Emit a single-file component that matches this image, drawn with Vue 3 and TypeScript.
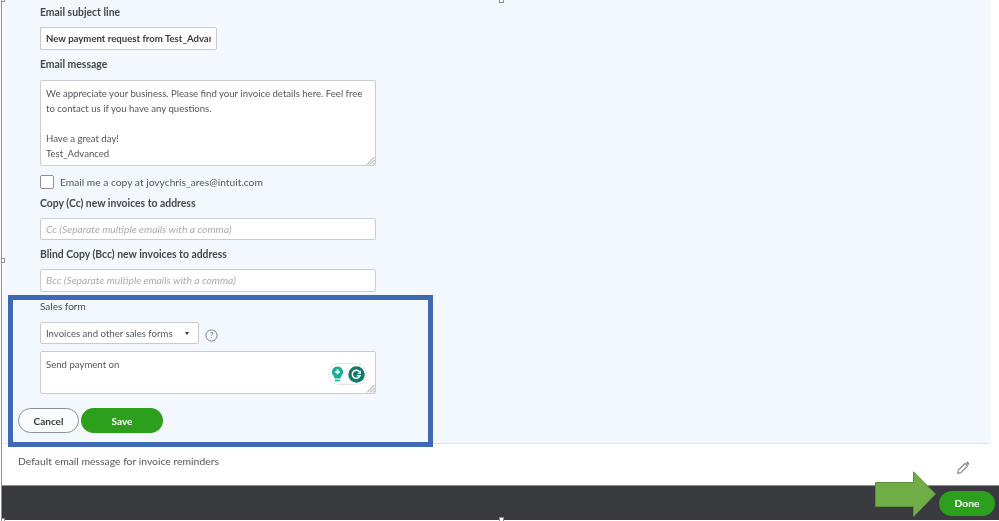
<script setup lang="ts">
const messageLines: string[] = [
  'We appreciate your business. Please find your invoice details here. Feel free',
  'to contact us if you have any questions.',
  '\u00a0',
  'Have a great day!',
  'Test_Advanced',
]
const handles: string[] = ['h-top', 'h-left', 'h-corner', 'h-bottom', 'h-bl']
</script>

<template>
  <div class="page">
    <main class="panel">
      <section class="form">
        <div class="label l-subject">Email subject line</div>
        <div class="field subject">New payment request from Test_Advanced</div>

        <div class="label l-message">Email message</div>
        <div class="field area message">
          <div v-for="(line, i) in messageLines" :key="i">{{ line }}</div>
          <svg class="grip" width="9" height="9" viewBox="0 0 9 9"><path d="M1 8.5 8.5 1M4 8.5 8.5 4M7 8.5 8.5 7" stroke="#777" stroke-width=".8" fill="none" /></svg>
        </div>

        <div class="check-row">
          <span class="checkbox"></span>
          <span class="check-text">Email me a copy at jovychris_ares@intuit.com</span>
        </div>

        <div class="label l-cc">Copy (Cc) new invoices to address</div>
        <div class="field ph cc">Cc (Separate multiple emails with a comma)</div>

        <div class="label l-bcc">Blind Copy (Bcc) new invoices to address</div>
        <div class="field ph bcc">Bcc (Separate multiple emails with a comma)</div>

        <div class="plain-label">Sales form</div>
        <div class="select-row">
          <div class="field select">
            <span>Invoices and other sales forms</span>
            <span class="caret"></span>
          </div>
          <svg class="help" width="13" height="13" viewBox="0 0 13 13">
            <circle cx="6.5" cy="6.5" r="5.6" fill="none" stroke="#7d8085" stroke-width="1" />
            <text x="6.5" y="9.3" text-anchor="middle" class="help-q">?</text>
          </svg>
        </div>
        <div class="field area payment">
          Send payment on
          <div class="grammarly">
            <svg width="13" height="17" viewBox="0 0 13 17">
              <path d="M6.5 0.5a5.6 5.6 0 0 1 3.4 10l-.3 2H3.4l-.3-2A5.6 5.6 0 0 1 6.5.5Z" fill="#15b097" />
              <path d="M6.5 3.3v5M4 5.8h5" stroke="#fff" stroke-width="1.8" />
              <path d="M3.8 14.5h5.4" stroke="#15b097" stroke-width="1.6" />
            </svg>
            <svg width="17" height="17" viewBox="0 0 17 17">
              <circle cx="8.5" cy="8.5" r="8.2" fill="#0f7a68" />
              <path d="M11.7 6.2a4 4 0 1 0 .3 3.6H8.8" fill="none" stroke="#fff" stroke-width="1.5" />
              <path d="M12.3 4.8v2.6H9.8" fill="none" stroke="#fff" stroke-width="1.2" />
            </svg>
          </div>
          <svg class="grip" width="9" height="9" viewBox="0 0 9 9"><path d="M1 8.5 8.5 1M4 8.5 8.5 4M7 8.5 8.5 7" stroke="#777" stroke-width=".8" fill="none" /></svg>
        </div>

        <div class="actions">
          <button class="btn cancel" type="button">Cancel</button>
          <button class="btn save" type="button">Save</button>
        </div>
      </section>
    </main>

    <div class="reminder">
      <span>Default email message for invoice reminders</span>
      <svg class="pencil" width="14" height="14" viewBox="0 0 14 14">
        <path d="M1.6 12.4l.8-3.3 6.6-6.6 2.5 2.5-6.6 6.6-3.3.8Z" fill="#fff" stroke="#85888c" stroke-width="1.1" stroke-linejoin="round" />
        <path d="M9.8 1.7l.8-.6a1 1 0 0 1 1.3 0l1 1a1 1 0 0 1 0 1.3l-.7.8Z" fill="#85888c" />
      </svg>
    </div>

    <footer class="footer">
      <button class="btn done" type="button">Done</button>
    </footer>

    <div class="highlight"></div>
    <svg class="arrow" width="62" height="47" viewBox="0 0 62 47">
      <path d="M.5 11.5h38V.8L60.5 23 38.5 45.7V35.5H.5Z" fill="#70ad47" stroke="#5b9138" stroke-width="1" />
    </svg>
    <span v-for="h in handles" :key="h" class="handle" :class="h"></span>
  </div>
</template>

<style>
html, body { margin: 0; background: #fff; }
</style>

<style scoped>
.page {
  position: relative;
  width: 998px;
  height: 521px;
  margin-left: 1px;
  overflow: hidden;
  background: #fff;
  font-family: "Lato", "Liberation Sans", sans-serif;
  font-size: 10px;
  color: #393a3d;
  border-left: 1px solid #8d8f92;
  box-sizing: border-box;
  filter: blur(0.3px);
}
.panel {
  height: 443px;
  margin-left: 1px;
  width: 987px;
  background: #f3f8fe;
  border-bottom: 1px solid #dfe2e6;
}
.form {
  height: 443px;
  padding-left: 15px;
  box-sizing: border-box;
  display: flex;
  flex-direction: column;
  align-items: flex-start;
}
.label, .plain-label, .field, .check-row, .select-row { margin-left: 22px; }
.label { font-weight: 700; font-size: 10.4px; line-height: 14px; color: #44464a; }
.plain-label { font-size: 10px; line-height: 14px; color: #44464a; margin-top: 7px; }
.l-subject { margin-top: 5px; }
.l-message { margin-top: 7px; }
.l-cc { margin-top: 7px; }
.l-bcc { margin-top: 7px; }
.field {
  box-sizing: border-box;
  background: #fff;
  border: 1px solid #c8cbcf;
  border-radius: 2px;
  padding: 0 5px;
  font-size: 9.6px;
  color: #55575b;
  white-space: nowrap;
}
.subject {
  width: 177px;
  height: 23px;
  line-height: 21px;
  margin-top: 8px;
  font-weight: 700;
  color: #393a3d;
  overflow: hidden;
  border-right-width: 6px;
  border-right-color: #fff;
  outline: 1px solid #c8cbcf;
  outline-offset: -1px;
}
.area { position: relative; width: 336px; }
.message {
  height: 86px;
  margin-top: 9px;
  padding-top: 5px;
  line-height: 15px;
}
.grip { position: absolute; right: 0; bottom: 0; }
.check-row {
  display: flex;
  align-items: center;
  gap: 6px;
  margin-top: 8px;
  height: 15px;
}
.checkbox {
  width: 14px;
  height: 14px;
  box-sizing: border-box;
  background: #fff;
  border: 1px solid #8d9096;
  border-radius: 2px;
}
.check-text { font-size: 10.25px; color: #55575b; }
.ph {
  width: 336px;
  line-height: 21px;
  font-size: 10.3px;
  font-style: italic;
  color: #a8abb0;
}
.cc { margin-top: 8px; height: 22px; }
.bcc { margin-top: 8px; height: 23px; }
.select-row {
  display: flex;
  align-items: flex-end;
  gap: 6px;
  margin-top: 9px;
}
.select {
  margin-left: 0;
  width: 159px;
  height: 22px;
  display: flex;
  align-items: center;
  justify-content: space-between;
  padding-right: 9px;
}
.caret {
  width: 0;
  height: 0;
  border-left: 2.5px solid transparent;
  border-right: 2.5px solid transparent;
  border-top: 3px solid #393a3d;
}
.help { margin-bottom: 2px; }
.help-q { font-size: 8px; fill: #7d8085; font-family: "Lato", sans-serif; }
.payment {
  height: 43px;
  margin-top: 7px;
  padding-top: 5px;
  line-height: 15px;
}
.grammarly {
  position: absolute;
  right: 8px;
  top: 11px;
  width: 39px;
  height: 22px;
  box-sizing: border-box;
  border: 1px solid #e3e6ea;
  border-radius: 11px;
  background: #fff;
  display: flex;
  align-items: center;
  justify-content: center;
  gap: 4px;
}
.actions {
  display: flex;
  gap: 2px;
  margin-top: 14px;
}
.btn {
  font-family: inherit;
  font-size: 10px;
  font-weight: 700;
  height: 25px;
  border-radius: 13px;
  padding: 0;
  box-sizing: border-box;
}
.cancel {
  width: 61px;
  background: #fbfcfe;
  border: 1px solid #8d9096;
  color: #393a3d;
}
.save {
  width: 82px;
  background: #2ca01c;
  border: 0;
  color: #fff;
}
.reminder {
  height: 41px;
  padding: 0 29px 7px 16px;
  box-sizing: border-box;
  display: flex;
  align-items: center;
  justify-content: space-between;
  font-size: 10.4px;
  color: #55575b;
}
.pencil { margin-top: 13px; }
.footer {
  height: 35px;
  background: #393a3d;
  border-top: 1px solid #8d8f92;
  box-sizing: border-box;
  display: flex;
  justify-content: flex-end;
  align-items: center;
  padding-right: 3px;
}
.done {
  width: 56px;
  background: #2ca01c;
  border: 0;
  color: #fff;
  font-size: 10.3px;
  margin-right: 1px;
}
.highlight {
  position: absolute;
  left: 6px;
  top: 295px;
  width: 425px;
  height: 152px;
  box-sizing: border-box;
  border: 5px solid #4069b5;
}
.arrow { position: absolute; left: 873px; top: 471px; }
.handle {
  position: absolute;
  width: 5px;
  height: 5px;
  box-sizing: border-box;
  background: #fff;
  border: 1px solid #8d8f92;
}
.h-top { left: 497px; top: -2px; }
.h-left { left: -2px; top: 258px; }
.h-corner { left: -2px; top: -3px; }
.h-bottom { left: 497px; top: 517px; }
.h-bl { left: -2px; top: 518px; }
</style>
